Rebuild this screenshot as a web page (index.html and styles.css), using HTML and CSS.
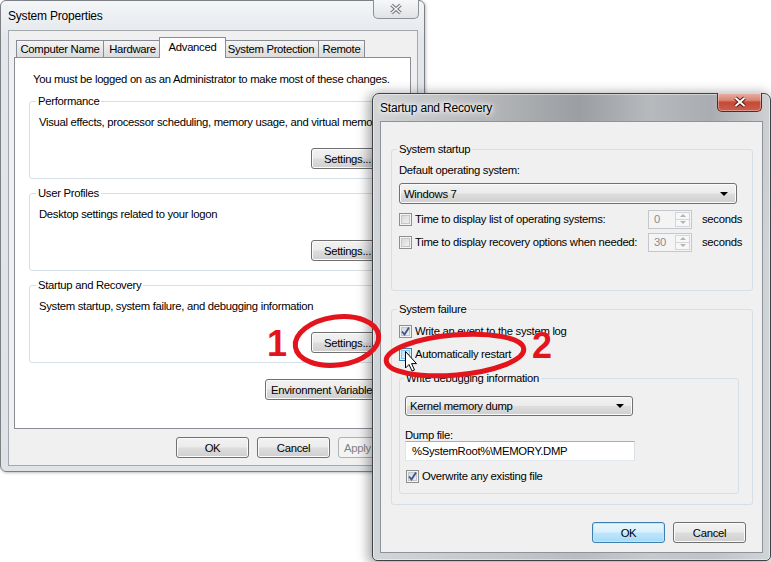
FILE: index.html
```html
<!doctype html>
<html lang="en">
<head>
<meta charset="utf-8">
<title>System Properties - Startup and Recovery</title>
<meta name="viewport" content="width=device-width, initial-scale=1">
<link rel="stylesheet" href="styles.css">
</head>
<body>
<div class="desk">

<div class="win win-sys">
  <div class="titlebar">
    <span class="title">System Properties</span>
    <span class="close close-idle">
      <svg width="16" height="12" viewBox="0 0 16 12"><path d="M3.5 2 L12.5 10 M12.5 2 L3.5 10" stroke="#6e7074" stroke-width="3.6"/><path d="M3.5 2 L12.5 10 M12.5 2 L3.5 10" stroke="#f2f3f4" stroke-width="1.6"/></svg>
    </span>
  </div>
  <div class="client client-sys">
    <div class="tabs">
      <div class="tab tab-cn">Computer Name</div>
      <div class="tab tab-hw">Hardware</div>
      <div class="tab tab-sel tab-adv">Advanced</div>
      <div class="tab tab-sp">System Protection</div>
      <div class="tab tab-rm">Remote</div>
    </div>
    <div class="tabpanel">
      <p class="note">You must be logged on as an Administrator to make most of these changes.</p>
      <fieldset class="group grp-sys">
        <legend>Performance</legend>
        <p>Visual effects, processor scheduling, memory usage, and virtual memory</p>
        <div class="btnrow"><button class="btn">Settings...</button></div>
      </fieldset>
      <fieldset class="group grp-sys">
        <legend>User Profiles</legend>
        <p>Desktop settings related to your logon</p>
        <div class="btnrow"><button class="btn">Settings...</button></div>
      </fieldset>
      <fieldset class="group grp-sys">
        <legend>Startup and Recovery</legend>
        <p>System startup, system failure, and debugging information</p>
        <div class="btnrow"><button class="btn">Settings...</button></div>
      </fieldset>
      <div class="btnrow env-row"><button class="btn btn-env">Environment Variables...</button></div>
    </div>
    <div class="dlgbtns">
      <button class="btn">OK</button>
      <button class="btn">Cancel</button>
      <button class="btn" disabled>Apply</button>
    </div>
  </div>
</div>

<div class="win win-sr">
  <div class="titlebar">
    <span class="title title-glow">Startup and Recovery</span>
    <span class="close close-red">
      <svg width="16" height="12" viewBox="0 0 16 12"><path d="M3.5 2 L12.5 10 M12.5 2 L3.5 10" stroke="#5a1a14" stroke-width="3.8"/><path d="M3.5 2 L12.5 10 M12.5 2 L3.5 10" stroke="#ffffff" stroke-width="1.8"/></svg>
    </span>
  </div>
  <div class="client client-sr">
    <fieldset class="group grp-start">
      <legend>System startup</legend>
      <div class="lbl lbl-os">Default operating system:</div>
      <div class="combo combo-os"><span>Windows 7</span><span class="arrow"></span></div>
      <div class="row row-first">
        <span class="chk"></span>
        <span class="rowlbl">Time to display list of operating systems:</span>
        <span class="spin"><span class="spin-val">0</span><span class="spin-btns"><span class="up"></span><span class="dn"></span></span></span>
        <span class="unit">seconds</span>
      </div>
      <div class="row">
        <span class="chk"></span>
        <span class="rowlbl">Time to display recovery options when needed:</span>
        <span class="spin"><span class="spin-val">30</span><span class="spin-btns"><span class="up"></span><span class="dn"></span></span></span>
        <span class="unit">seconds</span>
      </div>
    </fieldset>

    <fieldset class="group grp-fail">
      <legend>System failure</legend>
      <div class="row row-first">
        <span class="chk"><svg width="11" height="11" viewBox="0 0 11 11"><path d="M2 5.5 L4.5 8.5 L9 1.5" fill="none" stroke="#3d5590" stroke-width="1.9"/></svg></span>
        <span>Write an event to the system log</span>
      </div>
      <div class="row">
        <span class="chk chk-hot"></span>
        <span>Automatically restart</span>
      </div>
      <fieldset class="group grp-dbg">
        <legend>Write debugging information</legend>
        <div class="combo combo-dump"><span>Kernel memory dump</span><span class="arrow"></span></div>
        <div class="lbl lbl-dump">Dump file:</div>
        <div class="textbox">%SystemRoot%\MEMORY.DMP</div>
        <div class="row row-over">
          <span class="chk"><svg width="11" height="11" viewBox="0 0 11 11"><path d="M2 5.5 L4.5 8.5 L9 1.5" fill="none" stroke="#3d5590" stroke-width="1.9"/></svg></span>
          <span>Overwrite any existing file</span>
        </div>
      </fieldset>
    </fieldset>

    <div class="dlgbtns dlgbtns-sr">
      <button class="btn btn-default">OK</button>
      <button class="btn">Cancel</button>
    </div>
  </div>
</div>

<svg class="marks" width="771" height="562" viewBox="0 0 771 562">
  <ellipse cx="337" cy="341" rx="42" ry="24" transform="rotate(-8 337 341)" fill="none" stroke="#e3141c" stroke-width="5"/>
  <ellipse cx="455" cy="355" rx="69" ry="20" transform="rotate(-5 455 355)" fill="none" stroke="#e3141c" stroke-width="5"/>
  <text class="num" x="267" y="356">1</text>
  <text class="num" x="532" y="358">2</text>
  <path d="M405.5 351.5 L405.5 368 L409 364.5 L412 371 L414.5 370 L411.6 363.6 L416.5 363.6 Z" fill="#fff" stroke="#000" stroke-width="1" stroke-linejoin="round"/>
</svg>

</div>
</body>
</html>
```

FILE: styles.css
```css
* {
  box-sizing: border-box;
}
body {
  margin: 0;
  background: #fff;
  font: 11.3px/14px "Liberation Sans", Arial, sans-serif;
  letter-spacing: -0.3px;
  color: #000;
}
p {
  margin: 0;
}
.desk {
  position: relative;
  width: 771px;
  height: 562px;
  overflow: hidden;
  background: #fff;
}

/* window frames */
.win {
  position: absolute;
  display: flex;
  flex-direction: column;
}
.win-sys {
  left: 0;
  top: 0;
  width: 425px;
  height: 472px;
  padding: 0 6px 5px 7px;
  border: 1px solid #7c7f84;
  border-radius: 6px;
  background: linear-gradient(#f3f5f7, #e3e7eb 40px, #dfe3e7);
  box-shadow: 1px 1px 3px rgba(0, 0, 0, 0.25);
}
.win-sr {
  left: 372px;
  top: 93px;
  width: 399px;
  height: 468px;
  padding: 0 7px 7px 7px;
  border: 1px solid #3f4246;
  border-radius: 7px 7px 5px 5px;
  background:
    linear-gradient(rgba(255, 255, 255, 0) 60px, rgba(210, 214, 218, 0.55) 160px),
    linear-gradient(90deg, #d2d4d6, #b3b5b8 30%, #9b9ea2 52%, #b7babd 70%, #a9acb0 85%, #cfd1d4);
  box-shadow: -2px 2px 12px 2px rgba(0, 0, 0, 0.35), inset 0 0 0 1px rgba(255, 255, 255, 0.45);
}
.titlebar {
  display: flex;
  justify-content: space-between;
  height: 29px;
  flex: none;
}
.win-sr .titlebar {
  height: 27px;
}
.title {
  align-self: center;
  font-size: 12px;
  letter-spacing: -0.2px;
}
.title-glow {
  text-shadow: 0 0 6px #fff, 0 0 10px #fff, 0 0 3px #fff;
}
.close {
  display: flex;
  align-items: center;
  justify-content: center;
  height: 19px;
  margin-top: -1px;
  border-radius: 0 0 5px 5px;
}
.close-idle {
  width: 46px;
  margin-right: -1px;
  border: 1px solid #8d9196;
  border-top: none;
  background: linear-gradient(#f6f7f8, #e0e3e6);
}
.close-red {
  width: 45px;
  margin-right: 1px;
  border: 1px solid #5e241d;
  border-top: none;
  background: linear-gradient(#eab2a6, #d98573 40%, #c44a35 52%, #cb5f4f);
  box-shadow: inset 0 0 0 1px rgba(255, 255, 255, 0.35);
}
.client {
  flex: 1;
  background: #f0f0f0;
}
.client-sys {
  border: 1px solid #a3a8ae;
  padding: 6px 6px 0 5px;
}
.client-sr {
  border: 1px solid #8d939a;
  padding: 20px 9px 0 10px;
}

/* tabs */
.tabs {
  display: flex;
  align-items: flex-end;
  height: 21px;
  padding-left: 2px;
  margin-bottom: -1px;
}
.tab {
  height: 17px;
  margin: 0 0 1px -1px;
  border: 1px solid #898c95;
  border-bottom: none;
  background: linear-gradient(#f5f5f5, #e4e4e4 60%, #dcdcdc);
  text-align: center;
  line-height: 16px;
  white-space: nowrap;
}
.tab:first-child {
  margin-left: 0;
}
.tab-sel {
  position: relative;
  z-index: 1;
  height: 21px;
  margin: 0 -2px 0 -3px;
  background: #fff;
  line-height: 18px;
}
.tab-cn { width: 88px; }
.tab-hw { width: 59px; }
.tab-adv { width: 67px; }
.tab-sp { width: 96px; }
.tab-rm { width: 47px; }
.tabpanel {
  height: 372px;
  border: 1px solid #898c95;
  background: #fff;
  padding: 14px 0 0 14px;
  white-space: nowrap;
}
.note {
  margin: 0 0 8px 4px;
}

/* group boxes */
.group {
  margin: 0;
  min-width: 0;
  border: 1px solid #d5dfe5;
  border-radius: 3px;
}
.group legend {
  padding: 0 2px;
  line-height: 14px;
}
.grp-sys {
  width: 364px;
  padding: 0 8px 9px 9px;
  margin-bottom: 7px;
}
.grp-sys legend {
  margin-left: -3px;
}
.grp-sys p {
  margin-top: 7px;
}
.btnrow {
  display: flex;
  justify-content: flex-end;
  margin-top: 19px;
}
.env-row {
  width: 364px;
  justify-content: flex-start;
  padding-left: 236px;
  margin-top: 16px;
}
.grp-start {
  width: 362px;
  height: 149px;
  padding: 0 7px;
}
.grp-start legend,
.grp-fail legend {
  margin-left: -2px;
}
.grp-fail {
  width: 362px;
  height: 203px;
  margin-top: 11px;
  padding: 0 7px;
}
.grp-dbg {
  width: 340px;
  height: 123px;
  margin-top: 7px;
  padding: 0 5px;
}
.grp-dbg legend {
  margin-left: -1px;
}

/* buttons */
.btn {
  width: 73px;
  height: 21px;
  padding: 0;
  border: 1px solid #707070;
  border-radius: 3px;
  background: linear-gradient(#f2f2f2, #ebebeb 48%, #dddddd 52%, #cfcfcf);
  box-shadow: inset 0 0 0 1px #fbfbfb;
  font: inherit;
  letter-spacing: inherit;
  color: #000;
}
.btn-env {
  width: 130px;
  text-align: left;
  padding-left: 5px;
}
.btn:disabled {
  border-color: #adb2b5;
  background: #f4f4f4;
  box-shadow: none;
  color: #838383;
  text-align: left;
  padding-left: 5px;
}
.btn-default {
  border-color: #3c7fb1;
  background: linear-gradient(#eaf6fd, #d9f0fc 48%, #bee6fd 52%, #a7d9f5);
  box-shadow: inset 0 0 0 1px #c4e5f6;
}
.dlgbtns {
  display: flex;
  justify-content: flex-end;
  gap: 8px;
  margin-top: 8px;
}
.dlgbtns-sr {
  margin: 17px 7px 0 0;
}

/* form controls */
.lbl-os {
  margin-top: 7px;
}
.combo {
  display: flex;
  align-items: center;
  justify-content: space-between;
  height: 21px;
  padding: 0 8px 0 4px;
  border: 1px solid #707070;
  border-radius: 3px;
  background: linear-gradient(#f2f2f2, #ebebeb 48%, #dddddd 52%, #cfcfcf);
  box-shadow: inset 0 0 0 1px #fbfbfb;
}
.combo .arrow {
  width: 0;
  height: 0;
  border-left: 4px solid transparent;
  border-right: 4px solid transparent;
  border-top: 4px solid #000;
}
.combo-os {
  width: 338px;
  margin-top: 6px;
}
.combo-dump {
  width: 228px;
  height: 20px;
  margin-top: 11px;
}
.lbl-dump {
  margin-top: 12px;
}
.textbox {
  width: 230px;
  height: 20px;
  margin-top: -1px;
  padding-left: 6px;
  border: 1px solid;
  border-color: #abadb3 #dbdfe6 #e3e9ef #e2e3ea;
  background: #fff;
  line-height: 18px;
}
.row {
  display: flex;
  align-items: center;
  height: 20px;
  margin-top: 3px;
  white-space: nowrap;
}
.row-first {
  margin-top: 5px;
}
.row-over {
  height: 18px;
  margin-top: 6px;
  padding-left: 1px;
}
.chk {
  flex: none;
  display: flex;
  align-items: center;
  justify-content: center;
  width: 13px;
  height: 13px;
  margin-right: 3px;
  border: 1px solid #8e8f8f;
  background: linear-gradient(135deg, #cfd2d6, #f6f6f6);
  box-shadow: inset 0 0 0 1px #f4f4f4, inset 0 0 0 2px #c3c6ca;
}
.chk-hot {
  border-color: #3c7fb1;
  background: linear-gradient(135deg, #b9e1fb, #e6f5fd);
  box-shadow: inset 0 0 0 1px #def9fa, inset 0 0 0 2px #79c6f9;
}
.rowlbl {
  width: 233px;
}
.spin {
  display: flex;
  width: 44px;
  height: 19px;
  border: 1px solid #c4c7cb;
  background: #f4f4f4;
}
.spin-val {
  flex: 1;
  padding-left: 5px;
  color: #8d8d8d;
  line-height: 17px;
}
.spin-btns {
  display: flex;
  flex-direction: column;
  width: 15px;
  margin: 1px 1px 1px 0;
  border: 1px solid #d3d6d9;
  background: #f7f7f7;
}
.spin-btns span {
  flex: 1;
  display: flex;
  align-items: center;
  justify-content: center;
}
.spin-btns .up {
  border-bottom: 1px solid #d3d6d9;
}
.spin-btns .up::before {
  content: "";
  border-left: 3px solid transparent;
  border-right: 3px solid transparent;
  border-bottom: 3px solid #b3b6b9;
}
.spin-btns .dn::before {
  content: "";
  border-left: 3px solid transparent;
  border-right: 3px solid transparent;
  border-top: 3px solid #b3b6b9;
}
.unit {
  margin-left: 10px;
}

/* annotations */
.marks {
  position: absolute;
  left: 0;
  top: 0;
  pointer-events: none;
}
.num {
  font: bold 36px "Liberation Sans", Arial, sans-serif;
  fill: #e3141c;
}
```
